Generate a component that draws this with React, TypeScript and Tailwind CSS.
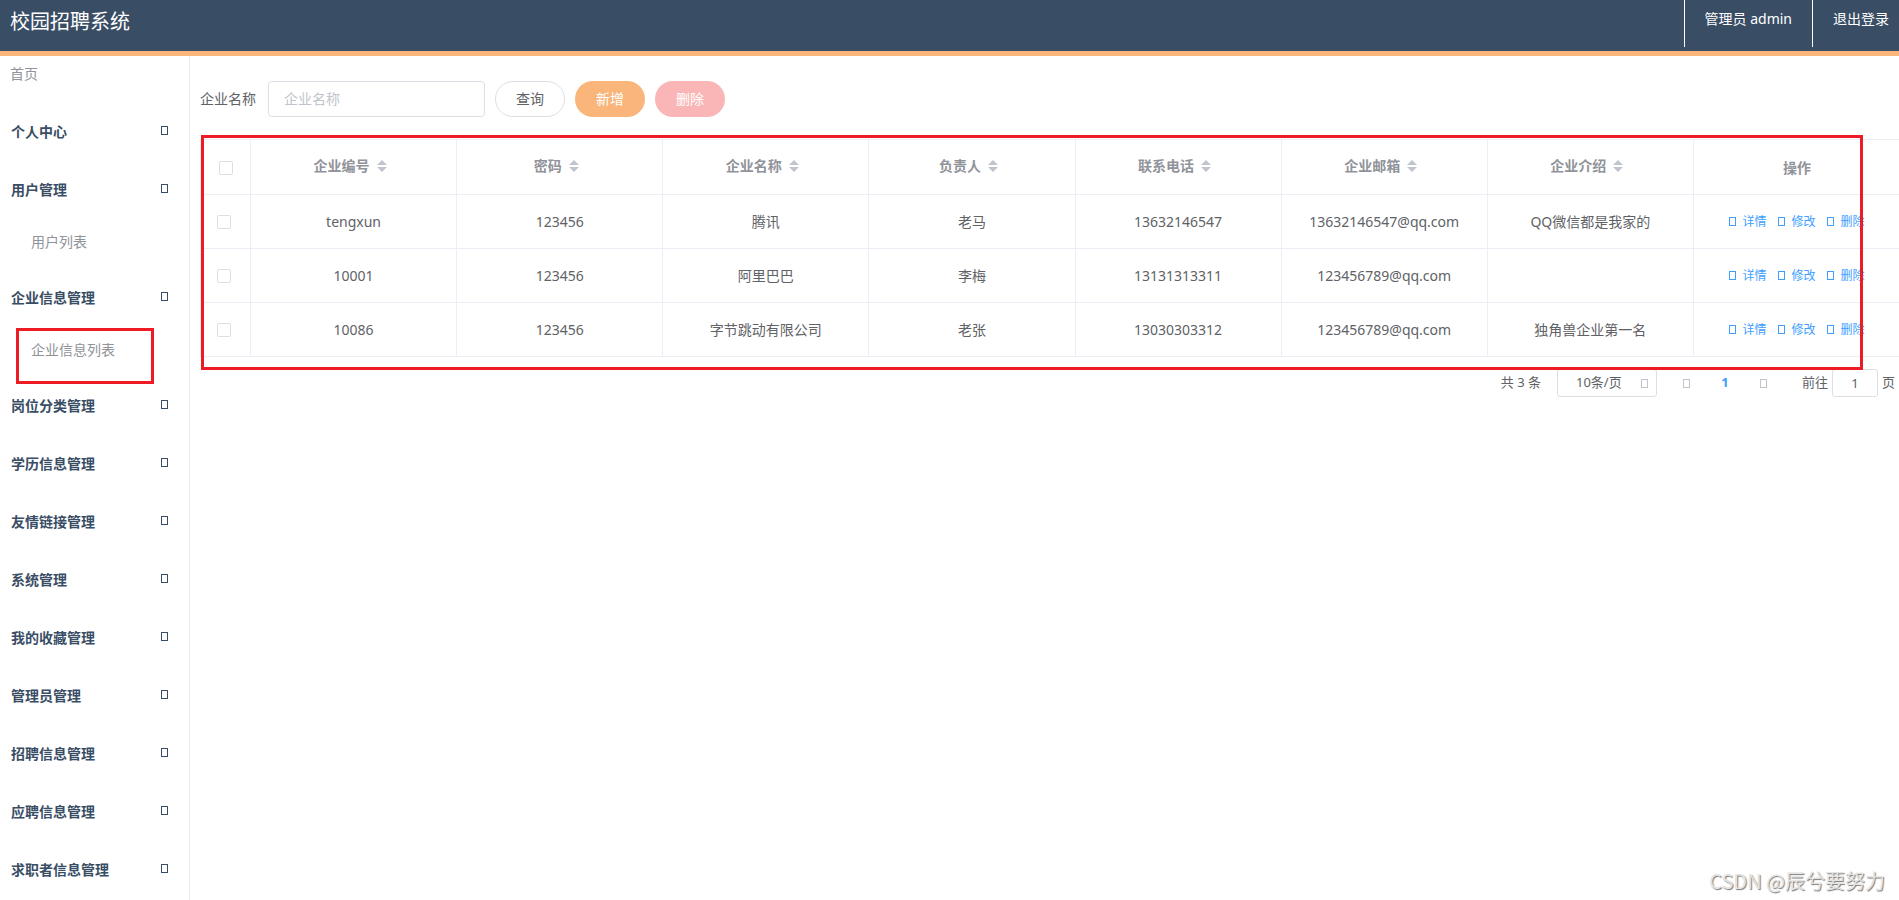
import React, { useState } from 'react'

type Company = {
  id: string
  password: string
  name: string
  owner: string
  phone: string
  email: string
  intro: string
}

type MenuGroup = {
  title: string
  children?: { label: string; highlighted?: boolean }[]
}

const menu: MenuGroup[] = [
  { title: '个人中心' },
  { title: '用户管理', children: [{ label: '用户列表' }] },
  {
    title: '企业信息管理',
    children: [{ label: '企业信息列表', highlighted: true }],
  },
  { title: '岗位分类管理' },
  { title: '学历信息管理' },
  { title: '友情链接管理' },
  { title: '系统管理' },
  { title: '我的收藏管理' },
  { title: '管理员管理' },
  { title: '招聘信息管理' },
  { title: '应聘信息管理' },
  { title: '求职者信息管理' },
]

const columns: { key: keyof Company; label: string }[] = [
  { key: 'id', label: '企业编号' },
  { key: 'password', label: '密码' },
  { key: 'name', label: '企业名称' },
  { key: 'owner', label: '负责人' },
  { key: 'phone', label: '联系电话' },
  { key: 'email', label: '企业邮箱' },
  { key: 'intro', label: '企业介绍' },
]

const companies: Company[] = [
  {
    id: 'tengxun',
    password: '123456',
    name: '腾讯',
    owner: '老马',
    phone: '13632146547',
    email: '13632146547@qq.com',
    intro: 'QQ微信都是我家的',
  },
  {
    id: '10001',
    password: '123456',
    name: '阿里巴巴',
    owner: '李梅',
    phone: '13131313311',
    email: '123456789@qq.com',
    intro: '',
  },
  {
    id: '10086',
    password: '123456',
    name: '字节跳动有限公司',
    owner: '老张',
    phone: '13030303312',
    email: '123456789@qq.com',
    intro: '独角兽企业第一名',
  },
]

const checkboxClass =
  'block h-3.5 w-3.5 shrink-0 appearance-none rounded-xs border border-[#dcdfe6] bg-white checked:border-[#409eff] checked:bg-[#409eff]'

// Empty box shown in place of an icon font glyph
function Glyph({ className = '' }: { className?: string }) {
  return (
    <span
      aria-hidden="true"
      className={`block h-[9px] w-[7px] shrink-0 border border-current ${className}`}
    />
  )
}

function SortCaret() {
  return (
    <svg
      width="24"
      height="12"
      viewBox="0 0 24 12"
      fill="#c0c4cc"
      aria-hidden="true"
    >
      <path d="M7 5L12 0L17 5Z" />
      <path d="M7 7L12 12L17 7Z" />
    </svg>
  )
}

function Header() {
  return (
    <header className="flex items-start justify-between border-b-5 border-[#f9b57a] bg-[#394d65] text-white">
      <h1 className="h-[51px] pl-2.5 text-xl leading-[44px]">校园招聘系统</h1>
      <div className="flex text-sm leading-[38px]">
        <span className="h-[47px] border-l border-white px-5">
          管理员 admin
        </span>
        <a href="#logout" className="h-[47px] border-l border-white pr-2.5 pl-5">
          退出登录
        </a>
      </div>
    </header>
  )
}

function Sidebar() {
  return (
    <nav className="w-[190px] shrink-0 border-r border-[#ebebeb] text-sm">
      <a
        href="#home"
        className="mb-3 block h-9 pl-2.5 leading-9 text-[#909399]"
      >
        首页
      </a>
      <ul>
        {menu.map((group) => (
          <li key={group.title} className="mb-0.5">
            <button
              type="button"
              className="flex h-14 w-full items-center justify-between pr-[21px] pl-[11px] font-bold text-[#394d65]"
            >
              {group.title}
              <Glyph className="mb-1" />
            </button>
            {group.children?.map((child) => (
              <div key={child.label} className="relative">
                <a
                  href="#list"
                  className="block h-[50px] pl-[31px] leading-[48px] text-[#909399]"
                >
                  {child.label}
                </a>
                {child.highlighted && (
                  <div className="pointer-events-none absolute top-0.5 left-4 z-10 h-14 w-[138px] border-3 border-[#ed1c24]" />
                )}
              </div>
            ))}
          </li>
        ))}
      </ul>
    </nav>
  )
}

function Toolbar({ canDelete }: { canDelete: boolean }) {
  return (
    <form
      className="flex items-center gap-2.5 text-sm text-[#606266]"
      onSubmit={(e) => e.preventDefault()}
    >
      <label htmlFor="company-name">企业名称</label>
      <input
        id="company-name"
        type="text"
        placeholder="企业名称"
        className="ml-0.5 h-9 w-[217px] rounded border border-[#dcdfe6] px-[15px] pb-0.5 outline-none placeholder:text-[#c0c4cc]"
      />
      <button
        type="submit"
        className="h-9 w-[70px] rounded-full border border-[#dcdfe6]"
      >
        查询
      </button>
      <button
        type="button"
        className="h-9 w-[70px] rounded-full bg-[#f9b57a] text-white"
      >
        新增
      </button>
      <button
        type="button"
        disabled={!canDelete}
        className="h-9 w-[70px] rounded-full bg-[#f56c6c] text-white disabled:bg-[#fab6b6]"
      >
        删除
      </button>
    </form>
  )
}

interface CompanyTableProps {
  selected: string[]
  onChange: (ids: string[]) => void
}

function CompanyTable({ selected, onChange }: CompanyTableProps) {
  const toggle = (id: string) =>
    onChange(
      selected.includes(id)
        ? selected.filter((s) => s !== id)
        : [...selected, id],
    )

  return (
    <table className="w-full table-fixed border-separate border-spacing-0 border-t border-l border-[#ebeef5] text-center text-sm text-[#606266]">
      <colgroup>
        <col className="w-[50px]" />
      </colgroup>
      <thead>
        <tr className="h-[55px] text-[#909399]">
          <th className="border-r border-b border-[#ebeef5] p-0 pt-0.5 pl-[18px]">
            <input
              type="checkbox"
              aria-label="全选"
              className={checkboxClass}
              checked={selected.length === companies.length}
              onChange={(e) =>
                onChange(e.target.checked ? companies.map((c) => c.id) : [])
              }
            />
          </th>
          {columns.map((col) => (
            <th
              key={col.key}
              className="border-r border-b border-[#ebeef5] p-0 pb-0.5"
            >
              <button
                type="button"
                className="flex w-full items-center justify-center"
              >
                {col.label}
                <SortCaret />
              </button>
            </th>
          ))}
          <th className="border-b border-[#ebeef5] p-0 pt-0.5">操作</th>
        </tr>
      </thead>
      <tbody>
        {companies.map((company) => (
          <tr key={company.id} className="h-[54px]">
            <td className="border-r border-b border-[#ebeef5] p-0 pl-4">
              <input
                type="checkbox"
                aria-label={company.name}
                className={checkboxClass}
                checked={selected.includes(company.id)}
                onChange={() => toggle(company.id)}
              />
            </td>
            {columns.map((col) => (
              <td
                key={col.key}
                className="border-r border-b border-[#ebeef5] p-0"
              >
                {company[col.key]}
              </td>
            ))}
            <td className="border-b border-[#ebeef5] p-0">
              <div className="flex justify-center gap-3 text-xs text-[#409eff]">
                {['详情', '修改', '删除'].map((action) => (
                  <button
                    key={action}
                    type="button"
                    className="flex items-center gap-1.5"
                  >
                    <Glyph />
                    {action}
                  </button>
                ))}
              </div>
            </td>
          </tr>
        ))}
      </tbody>
    </table>
  )
}

function Pagination() {
  return (
    <div className="flex h-7 items-center justify-end pr-1 text-[13px] text-[#606266]">
      <span>共 3 条</span>
      <div className="relative ml-4">
        <select
          aria-label="每页条数"
          className="block h-7 w-[100px] appearance-none rounded-[3px] border border-[#dcdfe6] bg-white pl-[18px] outline-none"
        >
          <option>10条/页</option>
          <option>20条/页</option>
          <option>50条/页</option>
        </select>
        <Glyph className="pointer-events-none absolute top-2.5 right-[9px] text-[#c0c4cc]" />
      </div>
      <button
        type="button"
        aria-label="上一页"
        className="ml-[26px] text-[#c0c4cc]"
      >
        <Glyph />
      </button>
      <button type="button" className="w-[70px] font-bold text-[#409eff]">
        1
      </button>
      <button type="button" aria-label="下一页" className="text-[#c0c4cc]">
        <Glyph />
      </button>
      <label htmlFor="page" className="ml-[35px]">
        前往
      </label>
      <input
        id="page"
        type="text"
        defaultValue="1"
        className="mx-1 h-7 w-[46px] rounded-[3px] border border-[#dcdfe6] text-center outline-none"
      />
      <span>页</span>
    </div>
  )
}

export default function App() {
  const [selected, setSelected] = useState<string[]>([])

  return (
    <div className="relative flex min-h-screen flex-col bg-white font-['Noto_Sans','Noto_Sans_CJK_SC',sans-serif]">
      <Header />
      <div className="flex flex-1">
        <Sidebar />
        <main className="min-w-0 flex-1 overflow-hidden pt-[25px] pl-2.5">
          <Toolbar canDelete={selected.length > 0} />
          <div className="relative mt-[22px] -mr-px mb-3">
            <CompanyTable selected={selected} onChange={setSelected} />
            <div className="pointer-events-none absolute -top-1 right-[37px] -bottom-[13px] left-px z-10 border-3 border-[#ed1c24]" />
          </div>
          <Pagination />
        </main>
      </div>
      <div className="pointer-events-none absolute right-3.5 bottom-1 font-['Noto_Sans_CJK_SC',sans-serif] text-xl leading-[30px] text-[#e4e4e4] [text-shadow:1px_1px_1px_#777777]">
        CSDN @辰兮要努力
      </div>
    </div>
  )
}
